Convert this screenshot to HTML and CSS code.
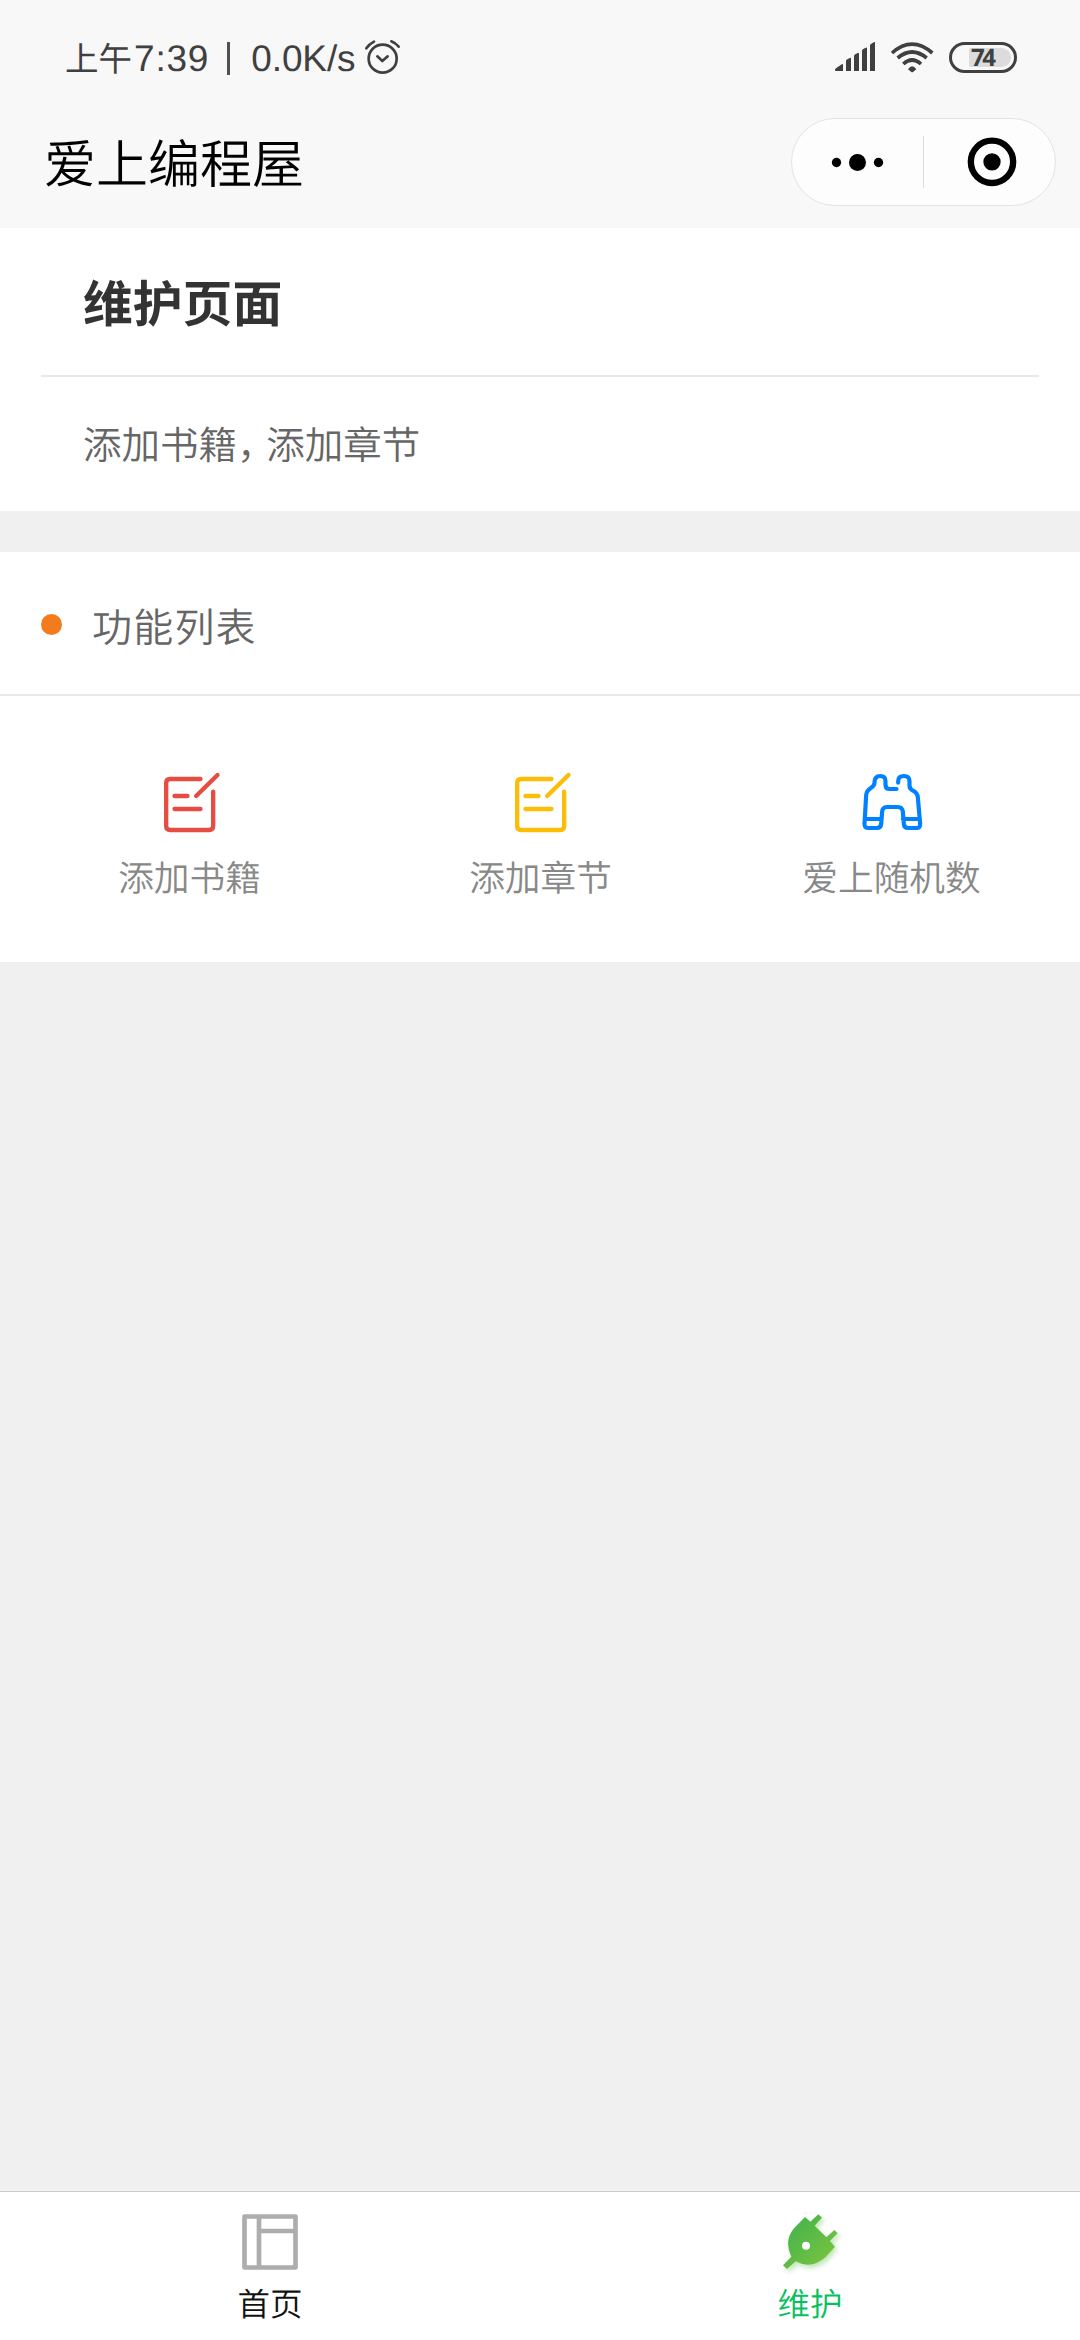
FILE: index.html
```html
<!DOCTYPE html>
<html lang="zh-CN">
<head>
<meta charset="utf-8">
<title>爱上编程屋</title>
<link rel="stylesheet" href="styles.css">
</head>
<body>
<div class="app">
  <header class="header">
    <div class="status">
      <span class="clock">上午</span><span class="latin">7:39</span><i class="bar"></i><span class="latin speed">0.0K/s</span>
      <svg class="alarm" viewBox="970 54 111 114" fill="none" stroke="#404040" stroke-width="8" stroke-linecap="round" stroke-linejoin="round"><circle cx="1026" cy="116" r="42"/><path d="M1010 109l15 14 16-14M977 85q9-13 23-20M1074 80q-10-11-22-16"/></svg>
      <svg class="signal" viewBox="189 60 129 102" fill="#404040"><path d="M192 151q-1-5 4-7l14-10q6-4 6 0v19h-22zM225 123q0-3 4-5l7-4q4-2 4 2v37h-15zM249 108q0-3 4-5l7-4q4-2 4 2v52h-15zM273 92q0-3 4-5l7-4q4-2 4 2v68h-15zM297 76q0-3 4-5l7-4q4-2 4 2v84h-15z"/></svg>
      <svg class="wifi" viewBox="357 60 132 102" fill="none" stroke="#404040" stroke-width="11"><path d="M363 99Q423 46 484 99M380 114Q423 78 467 114M397 132Q423 108 450 132"/><path d="M411 148q12-18 25 0l-9 7q-4 3-7 0z" fill="#404040" stroke="none"/></svg>
      <div class="battery"><div class="charge">74</div></div>
    </div>
    <div class="nav">
      <h1 class="app-name">爱上编程屋</h1>
      <div class="capsule">
        <svg class="more" viewBox="180 396 159 63"><circle cx="196.500" cy="427.500" r="14"/><circle cx="259.500" cy="427.500" r="25.500"/><circle cx="322.500" cy="427.500" r="14"/></svg>
        <i class="split"></i>
        <svg class="target" viewBox="588 353 150 150"><circle cx="663" cy="427.500" r="63.500" fill="none" stroke="#000" stroke-width="19"/><circle cx="663" cy="427.500" r="26"/></svg>
      </div>
    </div>
  </header>
  <section class="intro">
    <h2 class="intro-title">维护页面</h2>
    <p class="intro-text">添加书籍<span class="comma">，</span>添加章节</p>
  </section>
  <section class="features">
    <h3 class="features-title"><i class="dot"></i>功能列表</h3>
    <div class="grid">
      <div class="item">
        <svg class="icon" viewBox="163.500 48 210 210" fill="none" stroke="#e54d42" stroke-width="13" stroke-linecap="round"><path d="M300 87h-91q-12 0-12 12v129q0 12 12 12h117q12 0 12-12V125M222 138h39M222 177h78M287 138l64-63"/></svg>
        <span>添加书籍</span>
      </div>
      <div class="item">
        <svg class="icon" viewBox="166.500 48 210 210" fill="none" stroke="#fbbd08" stroke-width="13" stroke-linecap="round"><path d="M303 87h-91q-12 0-12 12v129q0 12 12 12h117q12 0 12-12V125M225 138h39M225 177h78M290 138l64-63"/></svg>
        <span>添加章节</span>
      </div>
      <div class="item">
        <svg class="icon" viewBox="199.500 48 210 210" fill="none" stroke="#0081ff" stroke-width="12.500" stroke-linecap="round" stroke-linejoin="round"><path d="M323 98v-4q0-16 17-16t17 16v12q0 11 9 15 15 7 16 21l7 80q1 12-11 12h-25q-12 0-13-12l-3-37q-2-14-15-14h-33q-13 0-14 14l-3 37q-1 12-13 12h-25q-13 0-12-12l5-87q1-13 14-21 11-7 11-16 0-20 17-20 16 0 16 16v10q0 13 13 13h20M225 207h47M337 207h49"/></svg>
        <span>爱上随机数</span>
      </div>
    </div>
  </section>
  <nav class="tabs">
    <div class="tab">
      <svg class="tab-icon" viewBox="105 82 210 210" fill="none" stroke="#adadad" stroke-width="14" stroke-linejoin="round"><path d="M133.500 110.500h153v153h-153zM177 111v152M177 154h109"/></svg>
      <span>首页</span>
    </div>
    <div class="tab active">
      <svg class="tab-icon" viewBox="75 82 210 210">
        <defs><linearGradient id="leaf" x1="0" y1="0" x2="1" y2="1"><stop offset=".2" stop-color="#4ab54b"/><stop offset="1" stop-color="#80c63d"/></linearGradient></defs>
        <path class="plug" fill="url(#leaf)" d="M165 112L181 126L205 104L216 114L194 138L229 173L253 151L263 161L240 184L255 201L226 233Q184 270 137 245L111 268L99 257L124 231Q101 184 132 146Z"/>
        <circle cx="168" cy="198" r="12" fill="#fff"/>
      </svg>
      <span>维护</span>
    </div>
  </nav>
</div>
</body>
</html>
```
FILE: styles.css
```css
* { box-sizing: border-box; margin: 0; padding: 0; }
body { background: #f0f0f0; font-family: "Noto Sans CJK SC", sans-serif; font-weight: 350; text-rendering: geometricPrecision; }
svg { display: block; flex: none; overflow: visible; }
.app { width: 1080px; height: 2340px; display: flex; flex-direction: column; }

.header { height: 228px; background: #f8f8f8; }
.status { height: 114px; padding: 0 63px 0 65px; display: flex; align-items: center; color: #404040; }
.clock { font-size: 33.500px; font-weight: 400; line-height: 50px; margin-top: -1px; }
.latin { font: 400 37px/50px "Liberation Sans", sans-serif; margin: 4px 0 0 2px; letter-spacing: .8px; }
.bar { width: 3px; height: 33px; margin: 3px 19px 0 18px; background: #505050; }
.speed { letter-spacing: -.1px; }
.alarm { width: 37px; height: 38px; margin-left: 8px; }
.signal { width: 43px; height: 34px; margin-left: auto; }
.wifi { width: 44px; height: 34px; margin-left: 13px; }
.battery { width: 68px; height: 31px; margin-left: 15px; padding: 3px; border: 3px solid #404040; border-radius: 16px; }
.charge { height: 19px; margin-left: 14px; background: #dcdcdc; border-radius: 2px 10px 10px 2px; font: 700 24px/19px "Open Sans", sans-serif; letter-spacing: -2.500px; padding-left: 2px; }
.nav { height: 114px; padding: 4px 24px 27px 44px; display: flex; align-items: flex-start; justify-content: space-between; }
.app-name { font-size: 52px; font-weight: 350; line-height: 86px; color: #000; }
.capsule { width: 265px; height: 88px; display: flex; align-items: center; background: #fdfdfd; border: 1px solid #e3e3e3; border-radius: 44px; }
.more { width: 53px; height: 21px; margin-left: 39px; }
.split { width: 1px; height: 52px; margin: 0 43px 0 39px; background: #dcdcdc; }
.target { width: 50px; height: 50px; }

.intro { height: 283px; background: #fff; padding: 0 41px; }
.intro-title { height: 149px; padding: 38px 42px 0; border-bottom: 2px solid #e8e8e8; font-size: 49.800px; font-weight: 700; line-height: 70px; color: #333; }
.intro-text { padding: 39px 42px; font-size: 38.500px; line-height: 54px; color: #666; }
.comma { letter-spacing: -9.200px; }

.features { height: 410px; margin-top: 41px; background: #fff; }
.features-title { height: 144px; padding: 4px 41px 0; display: flex; align-items: center; border-bottom: 2px solid #e8e8e8; font-size: 40px; font-weight: 350; letter-spacing: 1.200px; color: #666; }
.dot { width: 21px; height: 21px; margin: -2px 30px 0 0; border-radius: 50%; background: #f37b1d; }
.grid { display: grid; grid-template-columns: repeat(3, 1fr); padding: 70px 13px 0 14px; }
.item { display: flex; flex-direction: column; align-items: center; font-size: 35.700px; line-height: 52px; color: #888; }
.icon { width: 70px; height: 70px; margin-bottom: 15px; }

.tabs { height: 149px; margin-top: auto; display: grid; grid-template-columns: 1fr 1fr; background: #fff; border-top: 1px solid #ccc; }
.tab { padding-top: 15px; display: flex; flex-direction: column; align-items: center; font-size: 32.500px; line-height: 44px; color: #111; }
.tab-icon { width: 70px; height: 70px; margin-bottom: 4px; }
.active { color: #07c160; }
.plug { filter: drop-shadow(7px 9px 8px #6ac45270); }
```
